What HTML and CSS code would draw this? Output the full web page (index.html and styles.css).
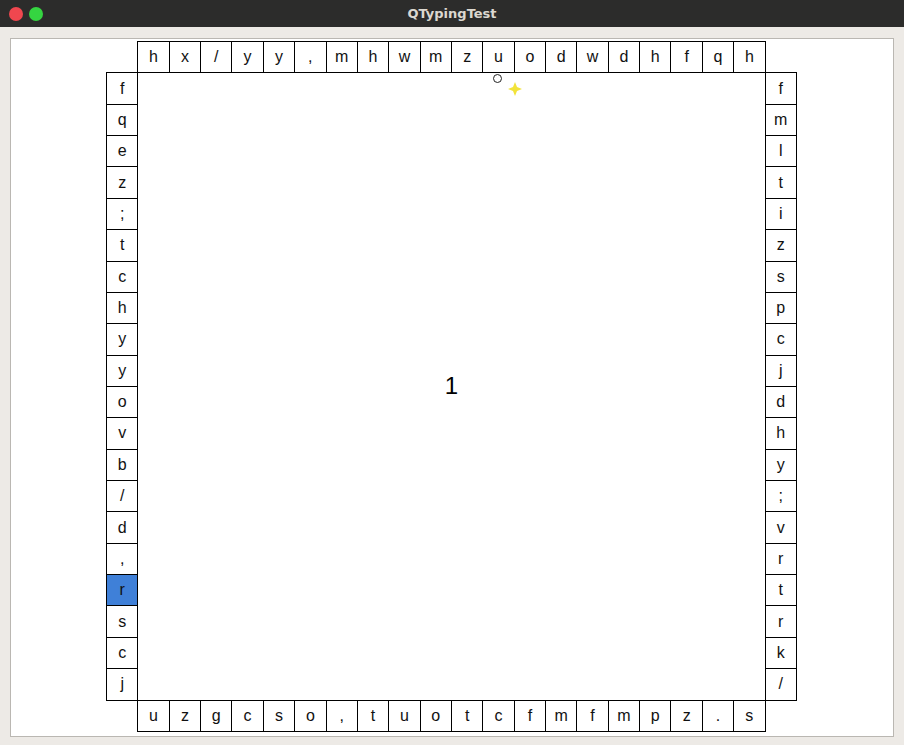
FILE: index.html
```html
<!DOCTYPE html>
<html>
<head>
<meta charset="utf-8">
<title>QTypingTest</title>
<link rel="stylesheet" href="styles.css">
</head>
<body>
<div class="window">
  <div class="titlebar">
    <div class="controls">
      <span class="dot red"></span>
      <span class="dot green"></span>
    </div>
    <div class="title">QTypingTest</div>
  </div>
  <div class="content">
    <div class="panel">
      <div class="board" id="board">
        <div class="center">1</div>
      </div>
      <span class="cursor-ring"></span>
      <svg class="spark" width="14" height="14" viewBox="0 0 14 14"><path d="M7 0 L9 5 L14 7 L9 9 L7 14 L5 9 L0 7 L5 5 Z" fill="#f2e33a"/></svg>
    </div>
  </div>
</div>
<script src="app.js"></script>
</body>
</html>
```
FILE: app.js
```js
(function () {
  var top = "hx/yy,mhwmzuodwdhfqh".split("");
  var bottom = "uzgcso,tuotcfmfmpz.s".split("");
  var left = "fqez;tchyyovb/d,rscj".split("");
  var right = "fmltizspcjdhy;vrtrk/".split("");
  var board = document.getElementById("board");
  function cell(ch, col, row, extra) {
    var d = document.createElement("div");
    d.className = "cell" + (extra ? " " + extra : "");
    d.style.gridColumn = col;
    d.style.gridRow = row;
    d.textContent = ch;
    board.appendChild(d);
  }
  top.forEach(function (c, i) { cell(c, i + 2, 1); });
  bottom.forEach(function (c, i) { cell(c, i + 2, 22); });
  left.forEach(function (c, i) { cell(c, 1, i + 2, i === 16 ? "active" : ""); });
  right.forEach(function (c, i) { cell(c, 22, i + 2); });
})();
```
FILE: styles.css
```css
html, body {
  margin: 0;
  padding: 0;
}
body {
  width: 904px;
  height: 745px;
  overflow: hidden;
  font-family: "Liberation Sans", Arial, sans-serif;
}
.window {
  width: 904px;
  height: 745px;
  display: flex;
  flex-direction: column;
  background: #edeae6;
}
.titlebar {
  height: 27px;
  background: #2c2c2b;
  display: flex;
  align-items: center;
  position: relative;
}
.controls {
  display: flex;
  gap: 6px;
  padding-left: 9px;
}
.dot {
  width: 14px;
  height: 14px;
  border-radius: 50%;
  display: block;
}
.red { background: #f0474f; }
.green { background: #35d541; }
.title {
  position: absolute;
  left: 0;
  right: 0;
  top: 0;
  line-height: 27px;
  text-align: center;
  color: #dcd8d0;
  font-family: "DejaVu Sans", sans-serif;
  font-weight: bold;
  font-size: 13px;
}
.content {
  flex: 1;
  padding: 11px 10px 8px 10px;
  display: flex;
}
.panel {
  flex: 1;
  background: #ffffff;
  border: 1px solid #bab7b2;
  position: relative;
  display: flex;
  justify-content: center;
  padding-top: 2px;
  padding-right: 2px;
}
.board {
  display: grid;
  grid-template-columns: repeat(22, 31.36px);
  grid-template-rows: repeat(22, 31.36px);
  width: 690px;
  height: 690px;
}
.cell {
  border: 1px solid #000;
  margin: 0 -1px -1px 0;
  display: flex;
  align-items: center;
  justify-content: center;
  font-size: 16px;
  color: #111;
  background: #fff;
}
.cell.active {
  background: #3f80d8;
}
.center {
  grid-column: 2 / 22;
  grid-row: 2 / 22;
  border: 1px solid #000;
  margin: 0 -1px -1px 0;
  display: flex;
  align-items: center;
  justify-content: center;
  font-size: 24px;
  color: #000;
}
.cursor-ring {
  position: absolute;
  left: 482px;
  top: 35px;
  width: 7px;
  height: 7px;
  border: 1px solid #222;
  border-radius: 50%;
}
.spark {
  position: absolute;
  left: 497px;
  top: 43px;
}
```
